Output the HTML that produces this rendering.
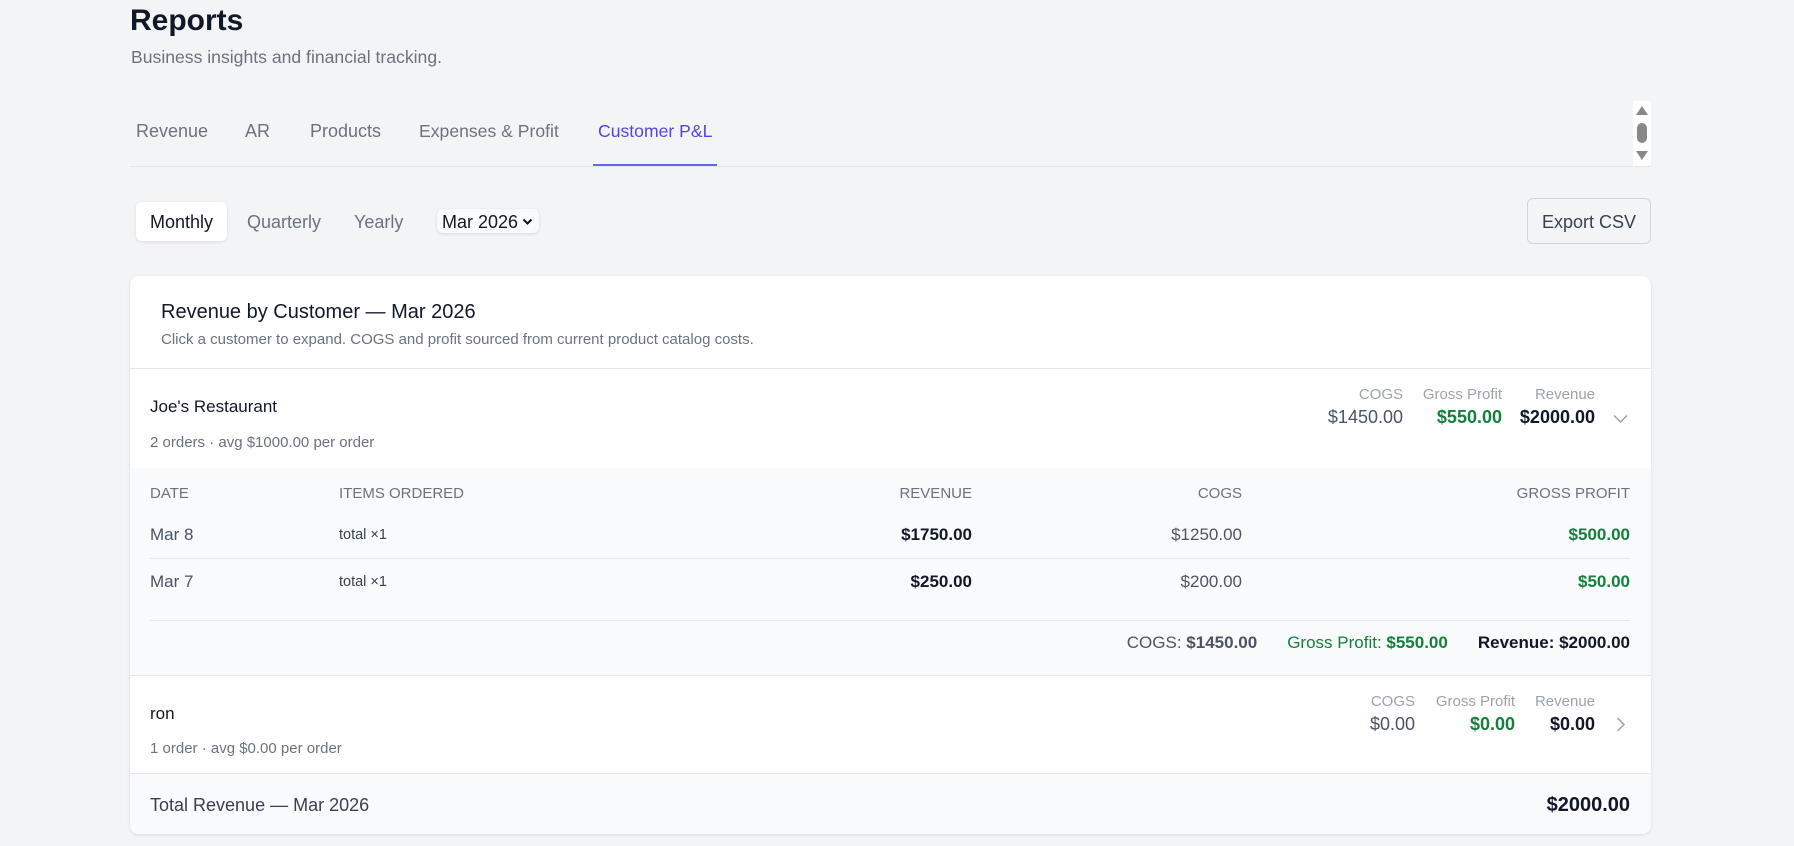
<!DOCTYPE html>
<html><head><meta charset="utf-8"><style>
*{margin:0;padding:0;box-sizing:border-box}
body{width:1794px;height:846px;background:#f3f4f6;font-family:"Liberation Sans",sans-serif;position:relative;overflow:hidden;color:#111827}
.a{position:absolute;white-space:nowrap;height:24px;line-height:24px}
.r{text-align:right}
.g{color:#6b7280}
.gr{color:#15803d;font-weight:bold}
.lab{color:#9ca3af;font-size:15px}
.hl{position:absolute;height:1px;background:#e5e7eb}
</style></head><body>
<div class="a" style="left:130px;top:3px;height:36px;line-height:36px;font-size:30px;font-weight:bold;color:#111827">Reports</div>
<div class="a g" style="left:131px;top:45px;font-size:17.6px">Business insights and financial tracking.</div>

<div class="a g" style="left:136px;top:119px;font-size:18px">Revenue</div>
<div class="a g" style="left:245px;top:119px;font-size:18px">AR</div>
<div class="a g" style="left:310px;top:119px;font-size:18px">Products</div>
<div class="a g" style="left:419px;top:119px;font-size:17.6px">Expenses &amp; Profit</div>
<div class="a" style="left:598px;top:119px;font-size:17.6px;color:#4f46e5">Customer P&amp;L</div>
<div class="hl" style="left:130px;top:166px;width:1521px"></div>
<div style="position:absolute;left:593px;top:164px;width:124px;height:2px;background:#6366f1"></div>
<div style="position:absolute;left:1633px;top:101px;width:18px;height:65px;background:#fff"></div>
<div style="position:absolute;left:1636px;top:106px;width:0;height:0;border-left:6px solid transparent;border-right:6px solid transparent;border-bottom:9px solid #888"></div>
<div style="position:absolute;left:1637px;top:123px;width:10px;height:20px;border-radius:5px;background:#888"></div>
<div style="position:absolute;left:1636px;top:151px;width:0;height:0;border-left:6px solid transparent;border-right:6px solid transparent;border-top:9px solid #888"></div>

<div style="position:absolute;left:136px;top:202px;width:91px;height:39px;background:#fff;border-radius:6px;box-shadow:0 1px 3px rgba(0,0,0,.1)"></div>
<div class="a" style="left:150px;top:210px;font-size:18px;color:#111827">Monthly</div>
<div class="a g" style="left:247px;top:210px;font-size:18px">Quarterly</div>
<div class="a g" style="left:354px;top:210px;font-size:18px">Yearly</div>
<div style="position:absolute;left:437px;top:209px;width:102px;height:24px;background:#f9fafb;border-radius:6px;box-shadow:0 1px 3px rgba(0,0,0,.12)"></div>
<div class="a" style="left:442px;top:210px;font-size:18px;color:#111827">Mar 2026</div>
<svg style="position:absolute;left:522px;top:218px" width="11" height="8"><path d="M1.5 1.5 L5.5 5.5 L9.5 1.5" fill="none" stroke="#111" stroke-width="2"/></svg>
<div style="position:absolute;left:1527px;top:198px;width:124px;height:46px;border:1px solid #d1d5db;border-radius:6px;background:#f3f4f6"></div>
<div class="a" style="left:1527px;top:210px;width:124px;text-align:center;font-size:18px;color:#374151">Export CSV</div>

<div style="position:absolute;left:130px;top:276px;width:1521px;height:558px;background:#fff;border-radius:9px;box-shadow:0 1px 3px rgba(0,0,0,.1);overflow:hidden">
 <div style="position:absolute;left:0;top:192px;width:100%;height:208px;background:#f9fafb;border-bottom:1px solid #e5e7eb"></div>
 <div style="position:absolute;left:0;top:497px;width:100%;height:61px;background:#f9fafb;border-top:1px solid #e5e7eb"></div>
 <div class="hl" style="left:0;top:92px;width:100%"></div>
</div>
<div class="a" style="left:161px;top:300px;font-size:20px;color:#111827">Revenue by Customer — Mar 2026</div>
<div class="a g" style="left:161px;top:328px;font-size:15px">Click a customer to expand. COGS and profit sourced from current product catalog costs.</div>

<div class="a" style="left:150px;top:395px;font-size:17px">Joe's Restaurant</div>
<div class="a g" style="left:150px;top:431px;font-size:15px">2 orders · avg $1000.00 per order</div>
<div class="a r lab" style="left:1303px;width:100px;top:383px">COGS</div>
<div class="a r lab" style="left:1402px;width:100px;top:383px">Gross Profit</div>
<div class="a r lab" style="left:1495px;width:100px;top:383px">Revenue</div>
<div class="a r" style="left:1283px;width:120px;top:405px;font-size:18px;color:#4b5563">$1450.00</div>
<div class="a r gr" style="left:1382px;width:120px;top:405px;font-size:18px">$550.00</div>
<div class="a r" style="left:1475px;width:120px;top:405px;font-size:18px;font-weight:bold">$2000.00</div>
<svg style="position:absolute;left:1613px;top:414px" width="15" height="10"><path d="M1 1.5 L7.5 8 L14 1.5" fill="none" stroke="#9ca3af" stroke-width="1.5"/></svg>

<div class="a g" style="left:150px;top:482px;font-size:15px">DATE</div>
<div class="a g" style="left:339px;top:482px;font-size:15px">ITEMS ORDERED</div>
<div class="a r g" style="left:852px;width:120px;top:482px;font-size:15px">REVENUE</div>
<div class="a r g" style="left:1122px;width:120px;top:482px;font-size:15px">COGS</div>
<div class="a r g" style="left:1430px;width:200px;top:482px;font-size:15px">GROSS PROFIT</div>
<div class="a" style="left:150px;top:523px;font-size:17px;color:#4b5563">Mar 8</div>
<div class="a" style="left:339px;top:523px;font-size:14.5px;color:#374151">total ×1</div>
<div class="a r" style="left:852px;width:120px;top:523px;font-size:17px;font-weight:bold">$1750.00</div>
<div class="a r" style="left:1122px;width:120px;top:523px;font-size:17px;color:#4b5563">$1250.00</div>
<div class="a r gr" style="left:1510px;width:120px;top:523px;font-size:17px">$500.00</div>
<div class="hl" style="left:150px;top:558px;width:1480px"></div>
<div class="a" style="left:150px;top:570px;font-size:17px;color:#4b5563">Mar 7</div>
<div class="a" style="left:339px;top:570px;font-size:14.5px;color:#374151">total ×1</div>
<div class="a r" style="left:852px;width:120px;top:570px;font-size:17px;font-weight:bold">$250.00</div>
<div class="a r" style="left:1122px;width:120px;top:570px;font-size:17px;color:#4b5563">$200.00</div>
<div class="a r gr" style="left:1510px;width:120px;top:570px;font-size:17px">$50.00</div>
<div class="hl" style="left:150px;top:620px;width:1480px"></div>
<div class="a r" style="left:1030px;width:600px;top:631px;font-size:17px"><span style="color:#4b5563">COGS: <b>$1450.00</b></span><span style="color:#15803d;margin-left:30px">Gross Profit: <b>$550.00</b></span><span style="margin-left:30px;font-weight:bold">Revenue: $2000.00</span></div>

<div class="a" style="left:150px;top:702px;font-size:17px">ron</div>
<div class="a g" style="left:150px;top:737px;font-size:15px">1 order · avg $0.00 per order</div>
<div class="a r lab" style="left:1315px;width:100px;top:690px">COGS</div>
<div class="a r lab" style="left:1415px;width:100px;top:690px">Gross Profit</div>
<div class="a r lab" style="left:1495px;width:100px;top:690px">Revenue</div>
<div class="a r" style="left:1295px;width:120px;top:712px;font-size:18px;color:#4b5563">$0.00</div>
<div class="a r gr" style="left:1395px;width:120px;top:712px;font-size:18px">$0.00</div>
<div class="a r" style="left:1475px;width:120px;top:712px;font-size:18px;font-weight:bold">$0.00</div>
<svg style="position:absolute;left:1616px;top:717px" width="10" height="15"><path d="M1.5 1 L8 7.5 L1.5 14" fill="none" stroke="#9ca3af" stroke-width="1.5"/></svg>

<div class="a" style="left:150px;top:793px;font-size:18px;color:#374151">Total Revenue — Mar 2026</div>
<div class="a r" style="left:1430px;width:200px;top:793px;font-size:20px;font-weight:bold">$2000.00</div>
</body></html>
